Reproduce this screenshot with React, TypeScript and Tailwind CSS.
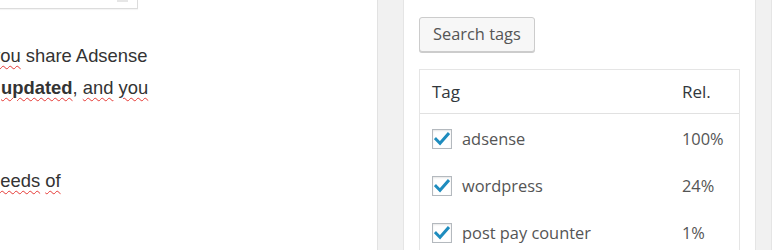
import React from "react";

const Check = () => (
  <div className="w-[20px] h-[20px] shrink-0 border border-[#b4b9be] bg-white shadow-[inset_0_1px_2px_rgba(0,0,0,0.1)] flex items-center justify-center">
    <svg width="16" height="14" viewBox="0 0 16 14">
      <path d="M2 7.2 L6 11.2 L14 2.2" fill="none" stroke="#1e8cbe" strokeWidth="3" strokeLinecap="square" strokeLinejoin="miter" />
    </svg>
  </div>
);

const rows = [
  { tag: "adsense", rel: "100%" },
  { tag: "wordpress", rel: "24%" },
  { tag: "post pay counter", rel: "1%" },
];

const sp = "underline decoration-wavy decoration-[#e53935] decoration-1 underline-offset-[3px]";

export default function App() {
  return (
    <div className="w-[772px] h-[250px] flex overflow-hidden bg-white">
      <div className="w-[377px] shrink-0 overflow-hidden" style={{ fontFamily: '"Liberation Sans", Arial, sans-serif' }}>
        <div className="h-[9px] w-[138px] border-r border-b border-[#dcdcdc] shadow-[0_1px_1px_rgba(0,0,0,0.04)] flex justify-end pr-[9px]">
          <div className="w-[11px] h-[2px] bg-[#e6e6e6]" />
        </div>
        <div className="mt-[31px] text-[18.4px] leading-[32px] text-[#333] whitespace-nowrap">
          <div className="ml-[-9px]">
            <span className={sp}>you</span> share Adsense
          </div>
          <div className="ml-[1px]">
            <b className={sp}>updated</b>, <span className={sp}>and</span> <span className={sp}>you</span>
          </div>
          <div className="mt-[61px] ml-[-10px]">
            <span className={sp}>needs</span> <span className={sp}>of</span>
          </div>
        </div>
      </div>
      <div className="w-[26px] shrink-0 bg-[#f1f1f1] border-l border-[#e2e2e2]" />
      <div className="w-[353px] shrink-0 bg-white border-l border-r border-[#e5e5e5] pl-[15px] pt-[17px]" style={{ fontFamily: '"Open Sans", sans-serif' }}>
        <button className="h-[35px] px-[13px] bg-[#f7f7f7] border border-[#cccccc] rounded-[3px] shadow-[0_1px_0_#cccccc] text-[16.4px] text-[#555] leading-none">
          Search tags
        </button>
        <div className="mt-[17px] w-[321px] border border-[#e5e5e5] border-b-0">
          <div className="h-[44px] flex items-center border-b border-[#e1e1e1] text-[17px] text-[#32373c]">
            <div className="flex-1 pl-[12px]">Tag</div>
            <div className="w-[57px]">Rel.</div>
          </div>
          <div className="pt-[2px]">
            {rows.map((r) => (
              <div key={r.tag} className="h-[47px] flex items-center text-[16.4px] text-[#555]">
                <div className="flex-1 pl-[12px] flex items-center gap-[10px]">
                  <Check />
                  <span>{r.tag}</span>
                </div>
                <div className="w-[57px]">{r.rel}</div>
              </div>
            ))}
          </div>
        </div>
      </div>
      <div className="flex-1 bg-[#f1f1f1] border-r border-[#e5e5e5]" />
    </div>
  );
}
